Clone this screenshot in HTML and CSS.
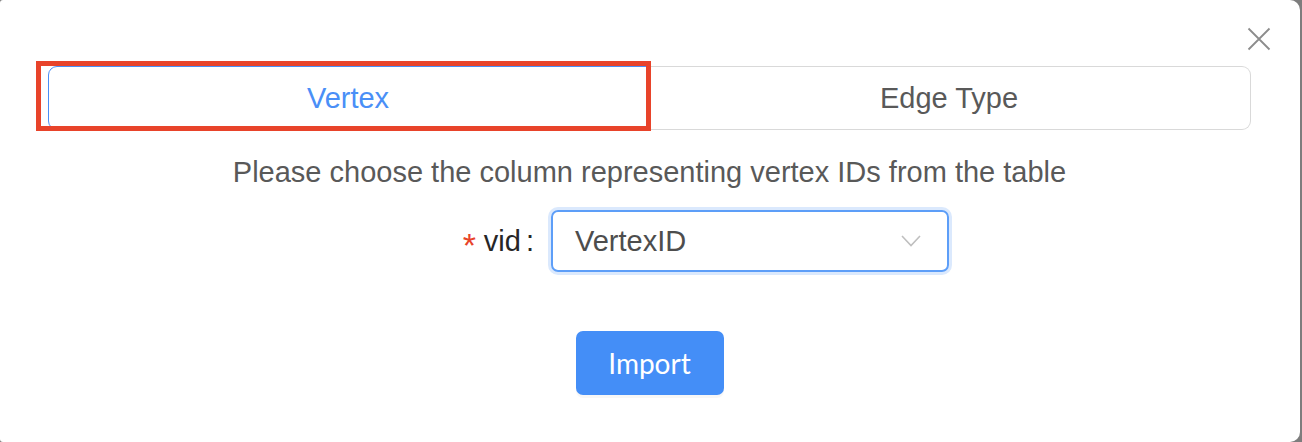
FILE: index.html
```html
<!DOCTYPE html>
<html>
<head>
<meta charset="utf-8">
<link rel="stylesheet" href="styles.css">
</head>
<body>
<div class="modal">
  <div class="modal-head">
    <button class="close" aria-label="Close">
      <svg width="24" height="24" viewBox="0 0 24 24"><path d="M1.5 1.5 L22.5 22.5 M22.5 1.5 L1.5 22.5" stroke="#8c8c8c" stroke-width="1.8" fill="none"/></svg>
    </button>
  </div>
  <div class="tabs">
    <div class="tab tab-active">Vertex</div>
    <div class="tab">Edge Type</div>
    <div class="annot"></div>
  </div>
  <p class="desc">Please choose the column representing vertex IDs from the table</p>
  <div class="form-row">
    <label class="label"><span class="req">*</span>vid<span class="colon">:</span></label>
    <div class="select">
      <span class="select-value">VertexID</span>
      <svg class="chev" width="20" height="12" viewBox="0 0 20 12"><path d="M1 1 L10 10.5 L19 1" stroke="#bfbfbf" stroke-width="1.6" fill="none"/></svg>
    </div>
  </div>
  <div class="actions">
    <button class="btn-primary">Import</button>
  </div>
</div>
</body>
</html>
```
FILE: styles.css
```css
* { box-sizing: border-box; }
html, body { margin: 0; padding: 0; }
body {
  background: #7d7d7d;
  width: 1302px;
  height: 442px;
  overflow: hidden;
  font-family: "Liberation Sans", Arial, sans-serif;
}
.modal {
  width: 1300px;
  height: 442px;
  background: #fff;
  border-radius: 3px 10px 10px 3px;
  padding: 27px 49px 0 48px;
}
.modal-head {
  display: flex;
  justify-content: flex-end;
  height: 39px;
  margin-right: -20px;
}
.close {
  border: 0;
  background: none;
  padding: 0;
  width: 24px;
  height: 24px;
  cursor: pointer;
}
.close svg { display: block; }
.tabs {
  position: relative;
  display: flex;
  height: 64px;
}
.tab {
  flex: 1;
  display: flex;
  align-items: center;
  justify-content: center;
  font-size: 29px;
  color: #595959;
  border: 1px solid #d9d9d9;
  border-left: 0;
  border-radius: 0 9px 9px 0;
}
.tab-active {
  color: #4a8ff7;
  border: 1px solid #4a8ff7;
  border-radius: 9px 0 0 9px;
  flex: 0 0 600px;
}
.annot {
  position: absolute;
  left: -12px;
  top: -5px;
  width: 615px;
  height: 70px;
  border: 5px solid #e8432a;
  pointer-events: none;
}
.desc {
  margin: 23px 0 0;
  text-align: center;
  font-size: 29px;
  line-height: 38px;
  color: #595959;
}
.form-row {
  display: flex;
  align-items: center;
  margin-top: 19px;
}
.label {
  flex: 0 0 503px;
  font-size: 29px;
  color: #262626;
  display: flex;
  align-items: center;
  justify-content: flex-end;
  padding-right: 17px;
}
.req {
  color: #e8432a;
  margin-right: 8px;
  font-size: 34px;
  line-height: 1;
  position: relative;
  top: 4px;
}
.colon { margin-left: 5px; }
.select {
  width: 398px;
  height: 62px;
  border: 2px solid #5d9ef8;
  border-radius: 7px;
  box-shadow: 0 0 0 3px #dbe9fd;
  display: flex;
  align-items: center;
  justify-content: space-between;
  padding: 0 26px 0 22px;
}
.select-value {
  font-size: 29px;
  color: #4d4d4d;
}
.chev { display: block; }
.actions {
  display: flex;
  justify-content: center;
  margin-top: 59px;
}
.btn-primary {
  width: 148px;
  height: 64px;
  background: #448ef7;
  color: #fff;
  border: 0;
  border-radius: 7px;
  font-family: "Lato", "Liberation Sans", sans-serif;
  font-size: 28px;
  box-shadow: 0 3px 0 rgba(0,0,0,0.03);
}
```
